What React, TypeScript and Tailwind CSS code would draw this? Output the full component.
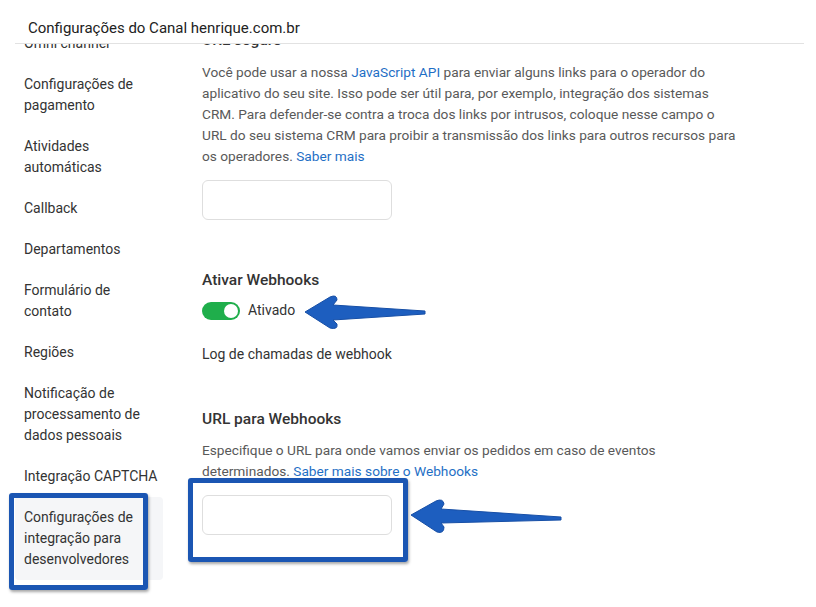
import React from "react";

const menu = [
  ["Omni channel"],
  ["Configurações de", "pagamento"],
  ["Atividades", "automáticas"],
  ["Callback"],
  ["Departamentos"],
  ["Formulário de", "contato"],
  ["Regiões"],
  ["Notificação de", "processamento de", "dados pessoais"],
  ["Integração CAPTCHA"],
];

function Arrow({ big }: { big?: boolean }) {
  // hand-drawn looking annotation arrow
  if (big) {
    return (
      <svg width="160" height="45" viewBox="0 0 160 45">
        <path
          d="M6,20 L31,6 Q38,3 39,9 L36,14 L156,22 L156,25 L36,28 L39,32 Q39,39 32,37 Z"
          fill="#1d5ebf"
          stroke="#174fa6"
          strokeWidth="1"
          strokeLinejoin="round"
        />
      </svg>
    );
  }
  return (
    <svg width="130" height="45" viewBox="0 0 130 45">
      <path
        d="M5,22 L30,7 Q37,4 37,10 L33,15 L125,21 L125,24 L33,30 L37,34 Q38,40 30,38 Z"
        fill="#1d5ebf"
        stroke="#174fa6"
        strokeWidth="1"
        strokeLinejoin="round"
      />
    </svg>
  );
}

export default function App() {
  return (
    <div className="h-[607px] w-[816px] overflow-hidden bg-white font-['Roboto',sans-serif] text-[14px] text-[#333]">
      <div className="relative z-10 ml-[15px] mr-[12px] h-[44px] border-b border-[#e2e2e2] bg-white pl-[13px] pt-[17px] text-[15px] leading-[22px] text-[#222]">
        Configurações do Canal henrique.com.br
      </div>

      <div className="-mt-[21px] flex">
        <div className="ml-[15px] w-[148px] shrink-0 whitespace-nowrap">
          {menu.map((lines, i) => (
            <div key={i} className="px-[9px] py-[10px] leading-[21px]">
              {lines.map((l) => (
                <div key={l}>{l}</div>
              ))}
            </div>
          ))}
          <div className="relative rounded-[4px] bg-[#f5f6f8] px-[9px] py-[10px] leading-[21px]">
            <div>Configurações de</div>
            <div>integração para</div>
            <div>desenvolvedores</div>
            <div className="absolute -left-[6px] -top-[4px] h-[97px] w-[139px] rounded-[3px] border-[5px] border-[#1b56b3] shadow-[1px_2px_3px_rgba(0,0,0,0.35)]" />
          </div>
        </div>

        <div className="w-[585px] pl-[39px] pt-[7px]">
          <div className="text-[15.5px] font-medium leading-[21px]">URL seguro</div>
          <p className="mt-[11px] whitespace-nowrap text-[13.7px] leading-[21px] text-[#595959]">
            Você pode usar a nossa <span className="text-[#1f6fc5]">JavaScript API</span> para enviar alguns links para o operador do
            <br />
            aplicativo do seu site. Isso pode ser útil para, por exemplo, integração dos sistemas
            <br />
            CRM. Para defender-se contra a troca dos links por intrusos, coloque nesse campo o
            <br />
            URL do seu sistema CRM para proibir a transmissão dos links para outros recursos para
            <br />
            os operadores. <span className="text-[#1f6fc5]">Saber mais</span>
          </p>
          <input className="mt-[13px] block h-[40px] w-[190px] rounded-[6px] border border-[#dedede] bg-white outline-none" />

          <div className="mt-[50px] text-[15.5px] font-medium leading-[21px]">Ativar Webhooks</div>
          <div className="relative mt-[9px] flex items-center gap-[8px] leading-[21px]">
            <div className="flex h-[18px] w-[38px] items-center justify-end rounded-full bg-[#1fae4b] pr-[2px]">
              <div className="h-[14px] w-[14px] rounded-full bg-white" />
            </div>
            <span>Ativado</span>
            <div className="absolute left-[98px] top-[-10px]">
              <Arrow />
            </div>
          </div>

          <div className="mt-[23px] leading-[21px]">Log de chamadas de webhook</div>

          <div className="mt-[44px] text-[15.5px] font-medium leading-[21px]">URL para Webhooks</div>
          <p className="mt-[10px] whitespace-nowrap text-[13.7px] leading-[21px] text-[#595959]">
            Especifique o URL para onde vamos enviar os pedidos em caso de eventos
            <br />
            determinados. <span className="text-[#1f6fc5]">Saber mais sobre o Webhooks</span>
          </p>
          <div className="relative mt-[13px] w-[190px]">
            <input className="block h-[40px] w-[190px] rounded-[6px] border border-[#dedede] bg-white outline-none" />
            <div className="absolute -left-[14px] -top-[17px] h-[84px] w-[220px] rounded-[3px] border-[5px] border-[#1b56b3] shadow-[1px_2px_3px_rgba(0,0,0,0.35)]" />
            <div className="absolute left-[203px] top-[0px]">
              <Arrow big />
            </div>
          </div>
        </div>
      </div>
    </div>
  );
}
